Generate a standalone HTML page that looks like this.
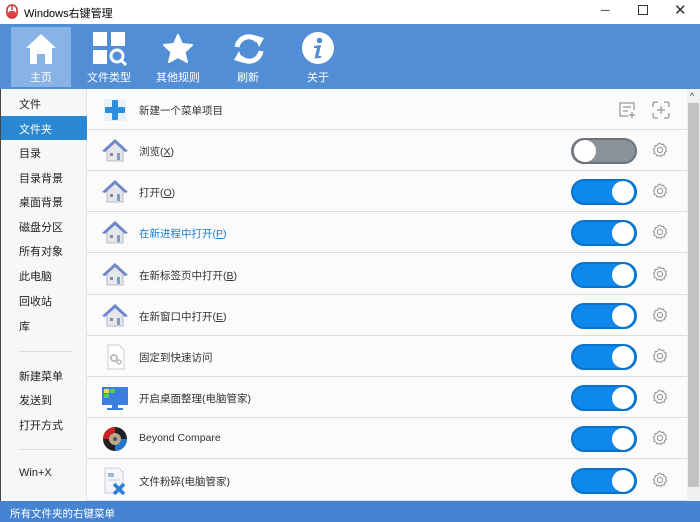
<!DOCTYPE html><html><head><meta charset="utf-8"><style>
*{margin:0;padding:0;box-sizing:border-box}
body{width:700px;height:522px;overflow:hidden;background:#fff;font-family:"Liberation Sans","Noto Sans CJK SC",sans-serif;font-size:11px;color:#333;position:relative}
.abs{position:absolute}
#title{left:0;top:0;width:700px;height:24px;background:#fff}
#tb{left:0;top:24px;width:700px;height:65px;background:#528ed6}
.btn{position:absolute;top:3px;width:60px;height:60px;color:#fff;text-align:center}
.btn .lb{position:absolute;top:42px;left:0;width:60px;font-size:11px}
.btn svg{position:absolute;left:14px;top:5px}
#side{left:0;top:89px;width:87px;height:412px;background:#f7f7f7;border-left:1px solid #444;border-right:1px solid #e3e3e3}
.si{position:absolute;left:18px;font-size:11px;color:#222}
.sep{position:absolute;left:18px;width:54px;height:1px;background:#ddd}
#main{left:87px;top:89px;width:600px;height:412px;background:#fbfbfb}
.row{position:absolute;left:0;width:600px;height:41px;border-bottom:1px solid #dcdcdc}
.row .t{position:absolute;left:52px;top:14px;font-size:10.5px;color:#333}
.tg{position:absolute;left:484px;top:8px;width:66px;height:26px;border-radius:13px;background:#0e88ea;border:2px solid #0a72c8}
.tg::after{content:"";position:absolute;right:1px;top:0px;width:22px;height:22px;border-radius:50%;background:#fff}
.tg.off{background:#8c9299;border-color:#6e737a}
.tg.off::after{left:1px;right:auto}
.gear{position:absolute;left:565px;top:12px}
#sb{left:687px;top:89px;width:13px;height:412px;background:#f0f0f0}
#status{left:0;top:501px;width:700px;height:21px;background:#4683d2;color:#fff;font-size:10.5px;padding:5px 0 0 10px}
</style></head><body>
<div id="title" class="abs">
<svg class="abs" style="left:5px;top:4px" width="14" height="15"><rect x="2" y="1" width="10" height="13" rx="5" fill="#fff" stroke="#c33" stroke-width="1.6"/><line x1="7" y1="1" x2="7" y2="6" stroke="#c33" stroke-width="1.4"/><rect x="2.8" y="7" width="8.4" height="6.2" rx="3" fill="#d44"/></svg>
<div class="abs" style="left:24px;top:5px;font-size:11px;color:#000">Windows右键管理</div>
<div class="abs" style="left:601px;top:3px;font-size:12px;color:#333">─</div>
<div class="abs" style="left:638px;top:5px;width:10px;height:10px;border:1px solid #333"></div>
<div class="abs" style="left:674px;top:1px;font-size:15px;color:#333">✕</div>
</div>
<div id="tb" class="abs">
<div class="btn" style="left:11px;background:#88b3e6"><svg width="32" height="34" viewBox="0 0 32 34"><path d="M16 2 L31 16 L27 16 L27 32 L20 32 L20 22 L12 22 L12 32 L5 32 L5 16 L1 16 Z" fill="#fff"/></svg><div class="lb">主页</div></div>
<div class="btn" style="left:79px"><svg width="34" height="34" viewBox="0 0 34 34"><rect x="0" y="0" width="14" height="14" fill="#fff"/><rect x="18" y="0" width="14" height="14" fill="#fff"/><rect x="0" y="18" width="14" height="14" fill="#fff"/><circle cx="24" cy="24" r="6" fill="none" stroke="#fff" stroke-width="3"/><line x1="28" y1="28" x2="33" y2="33" stroke="#fff" stroke-width="3"/></svg><div class="lb">文件类型</div></div>
<div class="btn" style="left:148px"><svg width="32" height="34" viewBox="0 0 32 32"><path d="M16 2 L20 11 L30 12 L22.5 19 L25 29 L16 24 L7 29 L9.5 19 L2 12 L12 11 Z" fill="#fff" stroke="#fff" stroke-width="2" stroke-linejoin="round"/></svg><div class="lb">其他规则</div></div>
<div class="btn" style="left:218px"><svg width="34" height="34" viewBox="0 0 34 34"><path d="M5 15 A12 12 0 0 1 26 9" fill="none" stroke="#fff" stroke-width="5"/><path d="M22 3 L32 6 L27 15 Z" fill="#fff"/><path d="M29 19 A12 12 0 0 1 8 25" fill="none" stroke="#fff" stroke-width="5"/><path d="M12 31 L2 28 L7 19 Z" fill="#fff"/></svg><div class="lb">刷新</div></div>
<div class="btn" style="left:288px"><svg width="34" height="34" viewBox="0 0 34 34"><circle cx="16" cy="16" r="16" fill="#fff"/><circle cx="17.5" cy="8.5" r="2.8" fill="#528ed6"/><path d="M12 14 L19 13 L16.5 24 L19.5 24 L18.5 26 L12.5 26.5 L15 16 L12 16 Z" fill="#528ed6"/></svg><div class="lb">关于</div></div>
</div>
<div id="side" class="abs">
<div class="si" style="top:7px">文件</div>
<div class="abs" style="left:0;top:27px;width:86px;height:24px;background:#2a88d2"></div>
<div class="si" style="top:32px;color:#fff">文件夹</div>
<div class="si" style="top:56px">目录</div>
<div class="si" style="top:81px">目录背景</div>
<div class="si" style="top:105px">桌面背景</div>
<div class="si" style="top:130px">磁盘分区</div>
<div class="si" style="top:154px">所有对象</div>
<div class="si" style="top:179px">此电脑</div>
<div class="si" style="top:204px">回收站</div>
<div class="si" style="top:229px">库</div>
<div class="sep" style="top:262px"></div>
<div class="si" style="top:279px">新建菜单</div>
<div class="si" style="top:303px">发送到</div>
<div class="si" style="top:328px">打开方式</div>
<div class="sep" style="top:360px"></div>
<div class="si" style="top:378px">Win+X</div>
</div>
<div id="main" class="abs">
<div class="row" style="top:0"><svg class="abs" style="left:17px;top:10px" width="22" height="22"><rect x="0" y="0" width="22" height="22" fill="#e6f1fb"/><rect x="8" y="1" width="6" height="20" rx="1" fill="#2d8ee0"/><rect x="1" y="8" width="20" height="6" rx="1" fill="#2d8ee0"/></svg><div class="t">新建一个菜单项目</div>
<svg class="abs" style="left:531px;top:12px" width="18" height="17" fill="none" stroke="#999" stroke-width="1.3"><path d="M10 15 H2 V2 H16 V9"/><line x1="5" y1="6" x2="13" y2="6"/><line x1="5" y1="10" x2="10" y2="10"/><line x1="14" y1="11" x2="14" y2="17"/><line x1="11" y1="14" x2="17" y2="14"/></svg>
<svg class="abs" style="left:565px;top:12px" width="18" height="18" fill="none" stroke="#999" stroke-width="1.3"><path d="M1 6 V3 Q1 1 3 1 H6 M12 1 H15 Q17 1 17 3 V6 M17 12 V15 Q17 17 15 17 H12 M6 17 H3 Q1 17 1 15 V12"/><line x1="9" y1="5" x2="9" y2="13"/><line x1="5" y1="9" x2="13" y2="9"/></svg></div>
</div>
<div id="sb" class="abs"><div class="abs" style="left:3px;top:2px;font-size:9px;color:#333">^</div><div class="abs" style="left:1px;top:14px;width:11px;height:384px;background:#c2c2c2"></div></div>
<div id="status" class="abs">所有文件夹的右键菜单</div>
<script>
var items=[["浏览(<u>X</u>)",0,"h"],["打开(<u>O</u>)",1,"h"],["在新进程中打开(<u>P</u>)",1,"h","#1a7fd0"],["在新标签页中打开(<u>B</u>)",1,"h"],["在新窗口中打开(<u>E</u>)",1,"h"],["固定到快速访问",1,"d"],["开启桌面整理(电脑管家)",1,"m"],["Beyond Compare",1,"b"],["文件粉碎(电脑管家)",1,"f"]];
var icons={h:'<svg width="28" height="26"><path d="M3 13 L14 3 L25 13 L22 13 L22 24 L6 24 L6 13 Z" fill="#e4e6ea" stroke="#aab" stroke-width=".8"/><path d="M1 14 L14 2 L27 14 L24 15 L14 6 L4 15 Z" fill="#6f86c9"/><rect x="16" y="16" width="3" height="7" fill="#7aa0c8"/><rect x="9" y="16" width="3" height="3" fill="#889"/></svg>',d:'<svg width="28" height="28"><path d="M7 2 H18 L23 7 V26 H7 Z" fill="#fff" stroke="#ccc"/><circle cx="13" cy="15" r="3" fill="none" stroke="#bbb" stroke-width="2"/><circle cx="18" cy="19" r="2" fill="none" stroke="#bbb" stroke-width="1.5"/></svg>',m:'<svg width="28" height="28"><rect x="1" y="3" width="26" height="18" fill="#3c7ede"/><rect x="3" y="5" width="5" height="4" fill="#e8e040"/><rect x="9" y="5" width="5" height="4" fill="#5c5"/><rect x="3" y="10" width="5" height="4" fill="#5c5"/><rect x="11" y="21" width="6" height="3" fill="#3c7ede"/><rect x="6" y="24" width="16" height="2" fill="#3c7ede"/></svg>',b:'<svg width="28" height="28"><circle cx="14" cy="14" r="12" fill="#222"/><path d="M14 2 A12 12 0 0 0 2 14 L8 14 A6 6 0 0 1 14 8 Z" fill="#c22"/><path d="M26 14 A12 12 0 0 1 14 26 L14 20 A6 6 0 0 0 20 14 Z" fill="#27c"/><circle cx="14" cy="14" r="6" fill="#b9a98a"/><circle cx="14" cy="14" r="2" fill="#555"/></svg>',f:'<svg width="28" height="28"><path d="M4 1 H18 L22 5 V26 H4 Z" fill="#f4f6f8" stroke="#ccd"/><rect x="7" y="6" width="6" height="4" fill="#9bd"/><line x1="7" y1="13" x2="19" y2="13" stroke="#ccd"/><path d="M13 17 L23 27 M23 17 L13 27" stroke="#2a7fd8" stroke-width="3.5"/></svg>'};
var gear='<svg width="16" height="16" viewBox="0 0 16 16" fill="none" stroke="#999" stroke-width="1.1"><path d="M8 1 L9.5 2.6 L11.7 2.2 L12.2 4.4 L14.3 5.3 L13.5 7.4 L14.6 9.3 L12.7 10.5 L12.6 12.8 L10.4 12.8 L8.9 14.6 L7.1 13.3 L5 14.1 L4.2 12 L2 11.5 L2.6 9.3 L1.4 7.4 L3 5.9 L2.9 3.7 L5.1 3.4 L6.4 1.6 Z" stroke-linejoin="round"/><circle cx="8" cy="8" r="2.6"/></svg>';
var h='';items.forEach(function(it,i){var top=41+i*41.2;h+='<div class="row" style="top:'+top+'px">'+'<div class="abs" style="left:14px;top:7px">'+icons[it[2]]+'</div><div class="t" style="'+(it[3]?'color:'+it[3]:'')+'">'+it[0]+'</div><div class="tg'+(it[1]?'':' off')+'"></div><div class="gear">'+gear+'</div></div>';});
document.getElementById('main').insertAdjacentHTML('beforeend',h);
</script>
</body></html>
